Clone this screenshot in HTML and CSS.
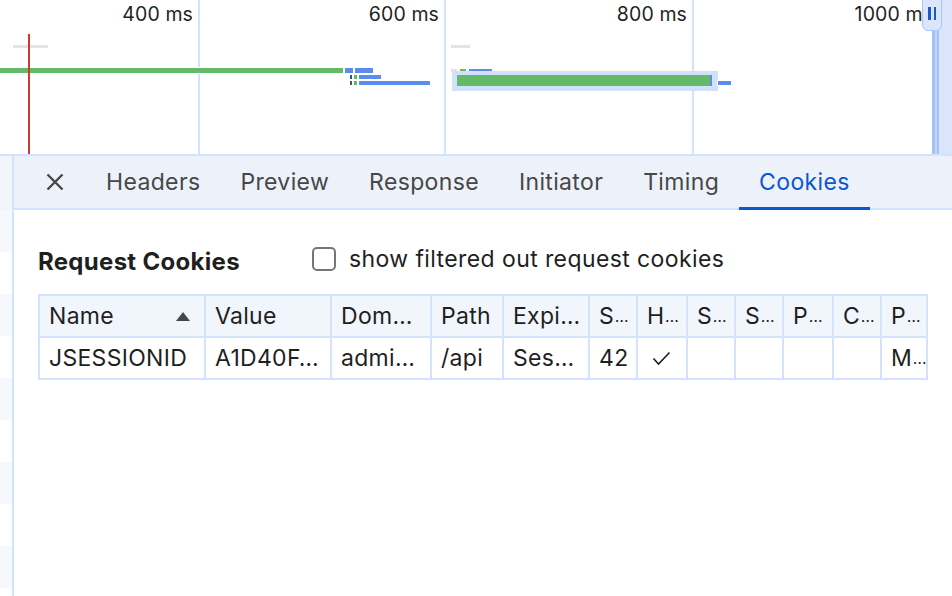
FILE: index.html
```html
<!DOCTYPE html>
<html>
<head>
<meta charset="utf-8">
<link rel="stylesheet" href="styles.css">
</head>
<body>
<div class="app">
  <div class="overview">
    <div class="gridline" style="left:198px"></div>
    <div class="gridline" style="left:444px"></div>
    <div class="gridline" style="left:692px"></div>
    <div class="tlabel" style="right:759px">400 ms</div>
    <div class="tlabel" style="right:513px">600 ms</div>
    <div class="tlabel" style="right:265px">800 ms</div>
    <div class="tlabel" style="right:19px">1000 ms</div>

    <div class="bar gray" style="left:13px;top:45px;width:35px;height:3px"></div>
    <div class="bar gray" style="left:451px;top:45px;width:19px;height:3px"></div>

    <div class="bar green" style="left:0;top:68px;width:343px;height:5px"></div>
    <div class="bar blue" style="left:345px;top:68px;width:8px;height:5px"></div>
    <div class="bar blue" style="left:355px;top:68px;width:18px;height:5px"></div>
    <div class="bar dark" style="left:350px;top:75px;width:2px;height:4px"></div>
    <div class="bar green" style="left:354px;top:75px;width:3px;height:4px"></div>
    <div class="bar blue" style="left:359px;top:75px;width:22px;height:4px"></div>
    <div class="bar dark" style="left:350px;top:81px;width:2px;height:4px"></div>
    <div class="bar green" style="left:354px;top:81px;width:3px;height:4px"></div>
    <div class="bar blue" style="left:359px;top:81px;width:71px;height:4px"></div>

    <div class="bar gray" style="left:451px;top:69px;width:6px;height:3px"></div>
    <div class="bar green" style="left:460px;top:69px;width:6px;height:3px"></div>
    <div class="bar blue" style="left:469px;top:69px;width:23px;height:3px"></div>
    <div class="selected-req">
      <div class="sel-green"></div>
      <div class="sel-blue"></div>
    </div>
    <div class="bar blue" style="left:718px;top:81px;width:13px;height:4px"></div>

    <div class="redline"></div>

    <div class="vtrack"></div>
    <div class="vstrip"></div>
    <div class="handle"><span></span><span></span></div>
  </div>

  <div class="bottom">
    <div class="reqlist">
      <div class="rq rq-head"></div>
      <div class="rq alt"></div>
      <div class="rq"></div>
      <div class="rq alt"></div>
      <div class="rq"></div>
      <div class="rq alt"></div>
      <div class="rq"></div>
      <div class="rq alt"></div>
      <div class="rq"></div>
      <div class="rq alt"></div>
    </div>
    <div class="details">
      <div class="tabbar">
        <button class="closebtn" aria-label="Close">
          <svg width="20" height="20" viewBox="0 0 20 20"><path d="M2.5 2.5 L17.5 17.5 M17.5 2.5 L2.5 17.5" stroke="#474747" stroke-width="2.4" fill="none" stroke-linecap="butt"/></svg>
        </button>
        <div class="tab">Headers</div>
        <div class="tab">Preview</div>
        <div class="tab">Response</div>
        <div class="tab">Initiator</div>
        <div class="tab">Timing</div>
        <div class="tab active">Cookies</div>
      </div>
      <div class="content">
        <div class="titlerow">
          <div class="title">Request Cookies</div>
          <label class="chk"><span class="box"></span>show filtered out request cookies</label>
        </div>
        <div class="grid">
          <div class="c h sort">Name<span class="tri"></span></div>
          <div class="c h">Value</div>
          <div class="c h">Dom…</div>
          <div class="c h">Path</div>
          <div class="c h">Expi…</div>
          <div class="c h n">S<span class="el">…</span></div>
          <div class="c h n">H<span class="el">…</span></div>
          <div class="c h n">S<span class="el">…</span></div>
          <div class="c h n">S<span class="el">…</span></div>
          <div class="c h n">P<span class="el">…</span></div>
          <div class="c h n">C<span class="el">…</span></div>
          <div class="c h n">P<span class="el">…</span></div>

          <div class="c">JSESSIONID</div>
          <div class="c">A1D40F…</div>
          <div class="c">admi…</div>
          <div class="c">/api</div>
          <div class="c">Ses…</div>
          <div class="c">42</div>
          <div class="c"><svg class="check" width="19" height="15" viewBox="0 0 19 15"><path d="M1.5 7.5 L6.5 13 L17.5 1.5" stroke="#1f1f1f" stroke-width="1.6" fill="none"/></svg></div>
          <div class="c"></div>
          <div class="c"></div>
          <div class="c"></div>
          <div class="c"></div>
          <div class="c n">M<span class="el">…</span></div>
        </div>
      </div>
    </div>
  </div>
</div>
</body>
</html>
```

FILE: styles.css
```css
* { box-sizing: border-box; }
html, body {
  margin: 0;
  padding: 0;
  width: 952px;
  height: 596px;
  overflow: hidden;
  background: #ffffff;
  font-family: Inter, "Noto Sans", "Liberation Sans", sans-serif;
  color: #1f1f1f;
}
.app {
  width: 952px;
  height: 596px;
  display: flex;
  flex-direction: column;
}

/* ---------- overview timeline (free canvas) ---------- */
.overview {
  position: relative;
  height: 156px;
  flex: none;
  border-bottom: 2px solid #d3e3fd;
  overflow: hidden;
}
.gridline {
  position: absolute;
  top: 0;
  width: 2px;
  height: 154px;
  background: #d3e3fd;
}
.tlabel {
  position: absolute;
  top: 1px;
  font-size: 19.5px;
  line-height: 26px;
  letter-spacing: 0.1px;
  color: #1f1f1f;
  white-space: nowrap;
}
.bar {
  position: absolute;
  box-shadow: 0 0 0 1px #ffffff;
}
.bar.green { background: #63bb6a; }
.bar.blue { background: #5b8def; }
.bar.dark { background: #2f5f77; }
.bar.gray { background: #e3e3e3; box-shadow: none; }
.selected-req {
  position: absolute;
  left: 452px;
  top: 71px;
  width: 266px;
  height: 20px;
  background: #d3e0fa;
  padding: 4px 6px 5px 5px;
  display: flex;
}
.sel-green { flex: 1; background: #63bb6a; }
.sel-blue { width: 2px; background: #5b8def; }
.redline {
  position: absolute;
  left: 28px;
  top: 34px;
  width: 2px;
  height: 120px;
  background: #d0392b;
}
.vstrip {
  position: absolute;
  left: 939px;
  top: 0;
  width: 13px;
  height: 154px;
  background: #dae5fb;
}
.vtrack {
  position: absolute;
  left: 932px;
  top: 28px;
  width: 7px;
  height: 126px;
  border-left: 3px solid #a3c1f6;
  border-right: 2px solid #a3c1f6;
  background-color: #c3d6fa;
}
.handle {
  position: absolute;
  left: 922px;
  top: -6px;
  width: 20px;
  height: 37px;
  background: #dbe6fb;
  border: 1.5px solid #a8c7fa;
  border-radius: 6px;
  display: flex;
  justify-content: center;
  align-items: flex-start;
  gap: 3px;
  padding-top: 12px;
}
.handle span {
  width: 2.5px;
  height: 13px;
  background: #1b57d0;
}

/* ---------- bottom ---------- */
.bottom {
  flex: 1;
  display: flex;
  min-height: 0;
}
.reqlist {
  width: 14px;
  flex: none;
  border-right: 2px solid #d3e3fd;
  display: flex;
  flex-direction: column;
  overflow: hidden;
}
.rq { height: 42px; flex: none; background: #ffffff; }
.rq.alt { background: #f5f8fd; }
.rq.rq-head { height: 54px; background: #f2f5fb; }

.details {
  flex: 1;
  display: flex;
  flex-direction: column;
  min-width: 0;
}
.tabbar {
  height: 54px;
  flex: none;
  background: #edf2fa;
  border-bottom: 2px solid #d3e3fd;
  display: flex;
  align-items: stretch;
  padding-left: 26px;
}
.closebtn {
  border: 0;
  background: transparent;
  padding: 0;
  width: 30px;
  margin-right: 16px;
  display: flex;
  align-items: center;
  justify-content: center;
  cursor: pointer;
}
.tab {
  position: relative;
  padding: 0 20px;
  display: flex;
  align-items: center;
  font-size: 23px;
  letter-spacing: 0.35px;
  color: #474747;
  white-space: nowrap;
}
.tab.active { color: #0b57d0; }
.tab.active::after {
  content: "";
  position: absolute;
  left: 0;
  right: 0;
  bottom: -2px;
  height: 3px;
  background: #0b57d0;
}

.content {
  padding: 0 0 0 24px;
}
.titlerow {
  height: 84px;
  display: flex;
  align-items: center;
  padding-top: 14px;
}
.title {
  font-weight: 700;
  font-size: 24px;
  letter-spacing: 0.3px;
  color: #1f1f1f;
  width: 274px;
  padding-top: 5px;
}
.chk {
  display: flex;
  align-items: center;
  font-size: 23px;
  letter-spacing: 0.4px;
  color: #1f1f1f;
  gap: 13px;
}
.box {
  width: 24px;
  height: 24px;
  border: 2px solid #747775;
  border-radius: 5px;
  display: inline-block;
}

.grid {
  display: grid;
  grid-template-columns: 166px 126px 100px 72px 86px 48px 50px 48px 48px 50px 48px 46px;
  width: 890px;
  border-left: 2px solid #d3e3fd;
  border-top: 2px solid #d3e3fd;
}
.c {
  height: 42px;
  border-right: 2px solid #d3e3fd;
  border-bottom: 2px solid #d3e3fd;
  padding: 0 6px 0 9px;
  display: flex;
  align-items: center;
  font-size: 23px;
  letter-spacing: 0.3px;
  color: #1f1f1f;
  white-space: nowrap;
  overflow: hidden;
}
.c.n { padding-right: 0; letter-spacing: 0; }
.c .el {
  font-size: 16px;
  letter-spacing: -0.5px;
  align-self: flex-end;
  padding-bottom: 10px;
  margin-left: 1px;
}
.c.h { background: #f1f5fc; }
.c.sort { justify-content: space-between; padding-right: 14px; }
.tri {
  width: 0;
  height: 0;
  border-left: 7.5px solid transparent;
  border-right: 7.5px solid transparent;
  border-bottom: 9px solid #474747;
}
.check { margin-left: 5px; }
```
